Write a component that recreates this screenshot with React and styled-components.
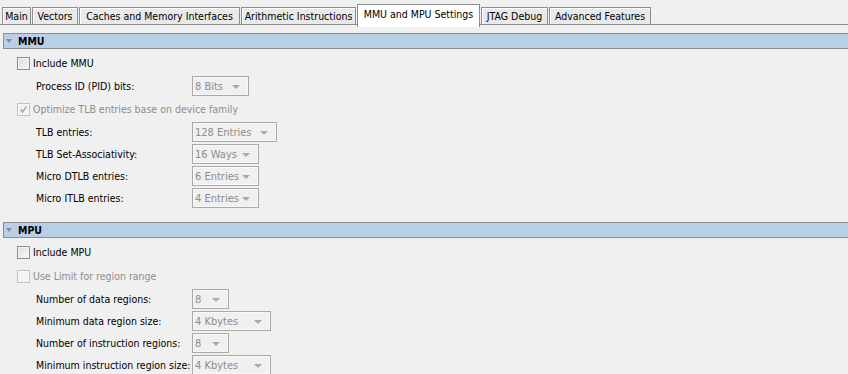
import styled, { createGlobalStyle } from 'styled-components';

const Global = createGlobalStyle`
  html, body {
    margin: 0;
    padding: 0;
    background: #f0f0f0;
  }
  body {
    font-family: "DejaVu Sans Condensed", "Liberation Sans", sans-serif;
    font-size: 10.5px;
    color: #000;
  }
`

const Page = styled.div`
  width: 848px;
  height: 374px;
  overflow: hidden;
  background: #f0f0f0;
`

const TabStrip = styled.div`
  height: 24px;
  display: flex;
  align-items: flex-end;
  padding-left: 2px;
  border-bottom: 1px solid #8d8d8d;
`

const Tab = styled.div`
  box-sizing: border-box;
  width: ${p => p.w}px;
  height: ${p => (p.active ? 23 : 17)}px;
  margin-right: 1px;
  margin-bottom: ${p => (p.active ? -3 : 0)}px;
  border: 1px solid #8d8d8d;
  border-bottom: none;
  background: ${p => (p.active ? '#fff' : '#e9e9e9')};
  box-shadow: ${p => (p.active ? 'none' : 'inset 1px 1px 0 #fff')};
  display: flex;
  align-items: ${p => (p.active ? 'flex-start' : 'center')};
  padding-top: ${p => (p.active ? 3 : 0)}px;
  justify-content: center;
  white-space: nowrap;
  position: relative;
  z-index: ${p => (p.active ? 1 : 0)};
`

const Section = styled.section`
  display: flex;
  flex-direction: column;
  margin-top: ${p => p.top}px;
`

const Header = styled.div`
  margin-left: 3px;
  height: 14px;
  border: 1px solid #8d8d8d;
  border-right: none;
  background: #b8cfe5;
  display: flex;
  align-items: center;
  font-weight: bold;
  margin-bottom: 2px;
`

const Caret = styled.span`
  width: 0;
  height: 0;
  margin: 0 6px 0 2px;
  border-left: 3px solid transparent;
  border-right: 3px solid transparent;
  border-top: 4px solid #8a8a8a;
`

const CheckRow = styled.label`
  height: 24px;
  display: flex;
  align-items: center;
  padding-left: 17px;
  color: ${p => (p.disabled ? '#8d8d8d' : '#000')};
`

const Box = styled.span`
  box-sizing: border-box;
  width: 13px;
  height: 13px;
  margin-right: 3px;
  border: 1px solid ${p => (p.disabled ? '#c2c2c2' : '#8e8f8f')};
  background: ${p => (p.disabled ? '#f4f4f4' : 'linear-gradient(135deg, #dcdcdc, #f8f8f8)')};
  box-shadow: inset 0 0 0 1px ${p => (p.disabled ? '#f7f7f7' : '#f2f2f2')};
  display: flex;
  align-items: center;
  justify-content: center;
`

const FieldRow = styled.div`
  height: 22px;
  display: flex;
  align-items: center;
  padding-left: 36px;
`

const Label = styled.span`
  flex: 0 0 156px;
  white-space: nowrap;
`

const Combo = styled.div`
  box-sizing: border-box;
  width: ${p => p.w}px;
  height: 20px;
  border: 1px solid #a9a9a9;
  box-shadow: inset 0 0 0 1px #f7f7f7;
  background: #f0f0f0;
  color: #8d8d8d;
  display: flex;
  align-items: center;
  justify-content: space-between;
  padding: 0 8px 0 2px;
  white-space: nowrap;
  font-size: 11px;
`

const Arrow = styled.span`
  width: 0;
  height: 0;
  margin-top: 2px;
  border-left: 4px solid transparent;
  border-right: 4px solid transparent;
  border-top: 4px solid #a9a9a9;
`

function Check({ label, checked, disabled }) {
  return (
    <CheckRow disabled={disabled}>
      <Box disabled={disabled}>
        {checked && (
          <svg width="9" height="9" viewBox="0 0 9 9">
            <path d="M1.5 4.5 L3.5 7 L7.5 1.5" fill="none" stroke="#a6a6a6" strokeWidth="1.4" />
          </svg>
        )}
      </Box>
      {label}
    </CheckRow>
  );
}

function Field({ label, value, w }) {
  return (
    <FieldRow>
      <Label>{label}</Label>
      <Combo w={w}>
        <span>{value}</span>
        <Arrow />
      </Combo>
    </FieldRow>
  );
}

const tabs = [
  ['Main', 29],
  ['Vectors', 46],
  ['Caches and Memory Interfaces', 161],
  ['Arithmetic Instructions', 115],
  ['MMU and MPU Settings', 123],
  ['JTAG Debug', 67],
  ['Advanced Features', 102],
];

export default function App() {
  return (
    <Page>
      <Global />
      <TabStrip>
        {tabs.map(([name, w]) => (
          <Tab key={name} w={w} active={name === 'MMU and MPU Settings'}>{name}</Tab>
        ))}
      </TabStrip>
      <Section top={8}>
        <Header><Caret />MMU</Header>
        <Check label="Include MMU" />
        <Field label="Process ID (PID) bits:" value="8 Bits" w={57} />
        <Check label="Optimize TLB entries base on device family" checked disabled />
        <Field label="TLB entries:" value="128 Entries" w={85} />
        <Field label="TLB Set-Associativity:" value="16 Ways" w={67} />
        <Field label="Micro DTLB entries:" value="6 Entries" w={67} />
        <Field label="Micro ITLB entries:" value="4 Entries" w={67} />
      </Section>
      <Section top={13}>
        <Header><Caret />MPU</Header>
        <Check label="Include MPU" />
        <Check label="Use Limit for region range" disabled />
        <Field label="Number of data regions:" value="8" w={37} />
        <Field label="Minimum data region size:" value="4 Kbytes" w={79} />
        <Field label="Number of instruction regions:" value="8" w={37} />
        <Field label="Minimum instruction region size:" value="4 Kbytes" w={79} />
      </Section>
    </Page>
  );
}
